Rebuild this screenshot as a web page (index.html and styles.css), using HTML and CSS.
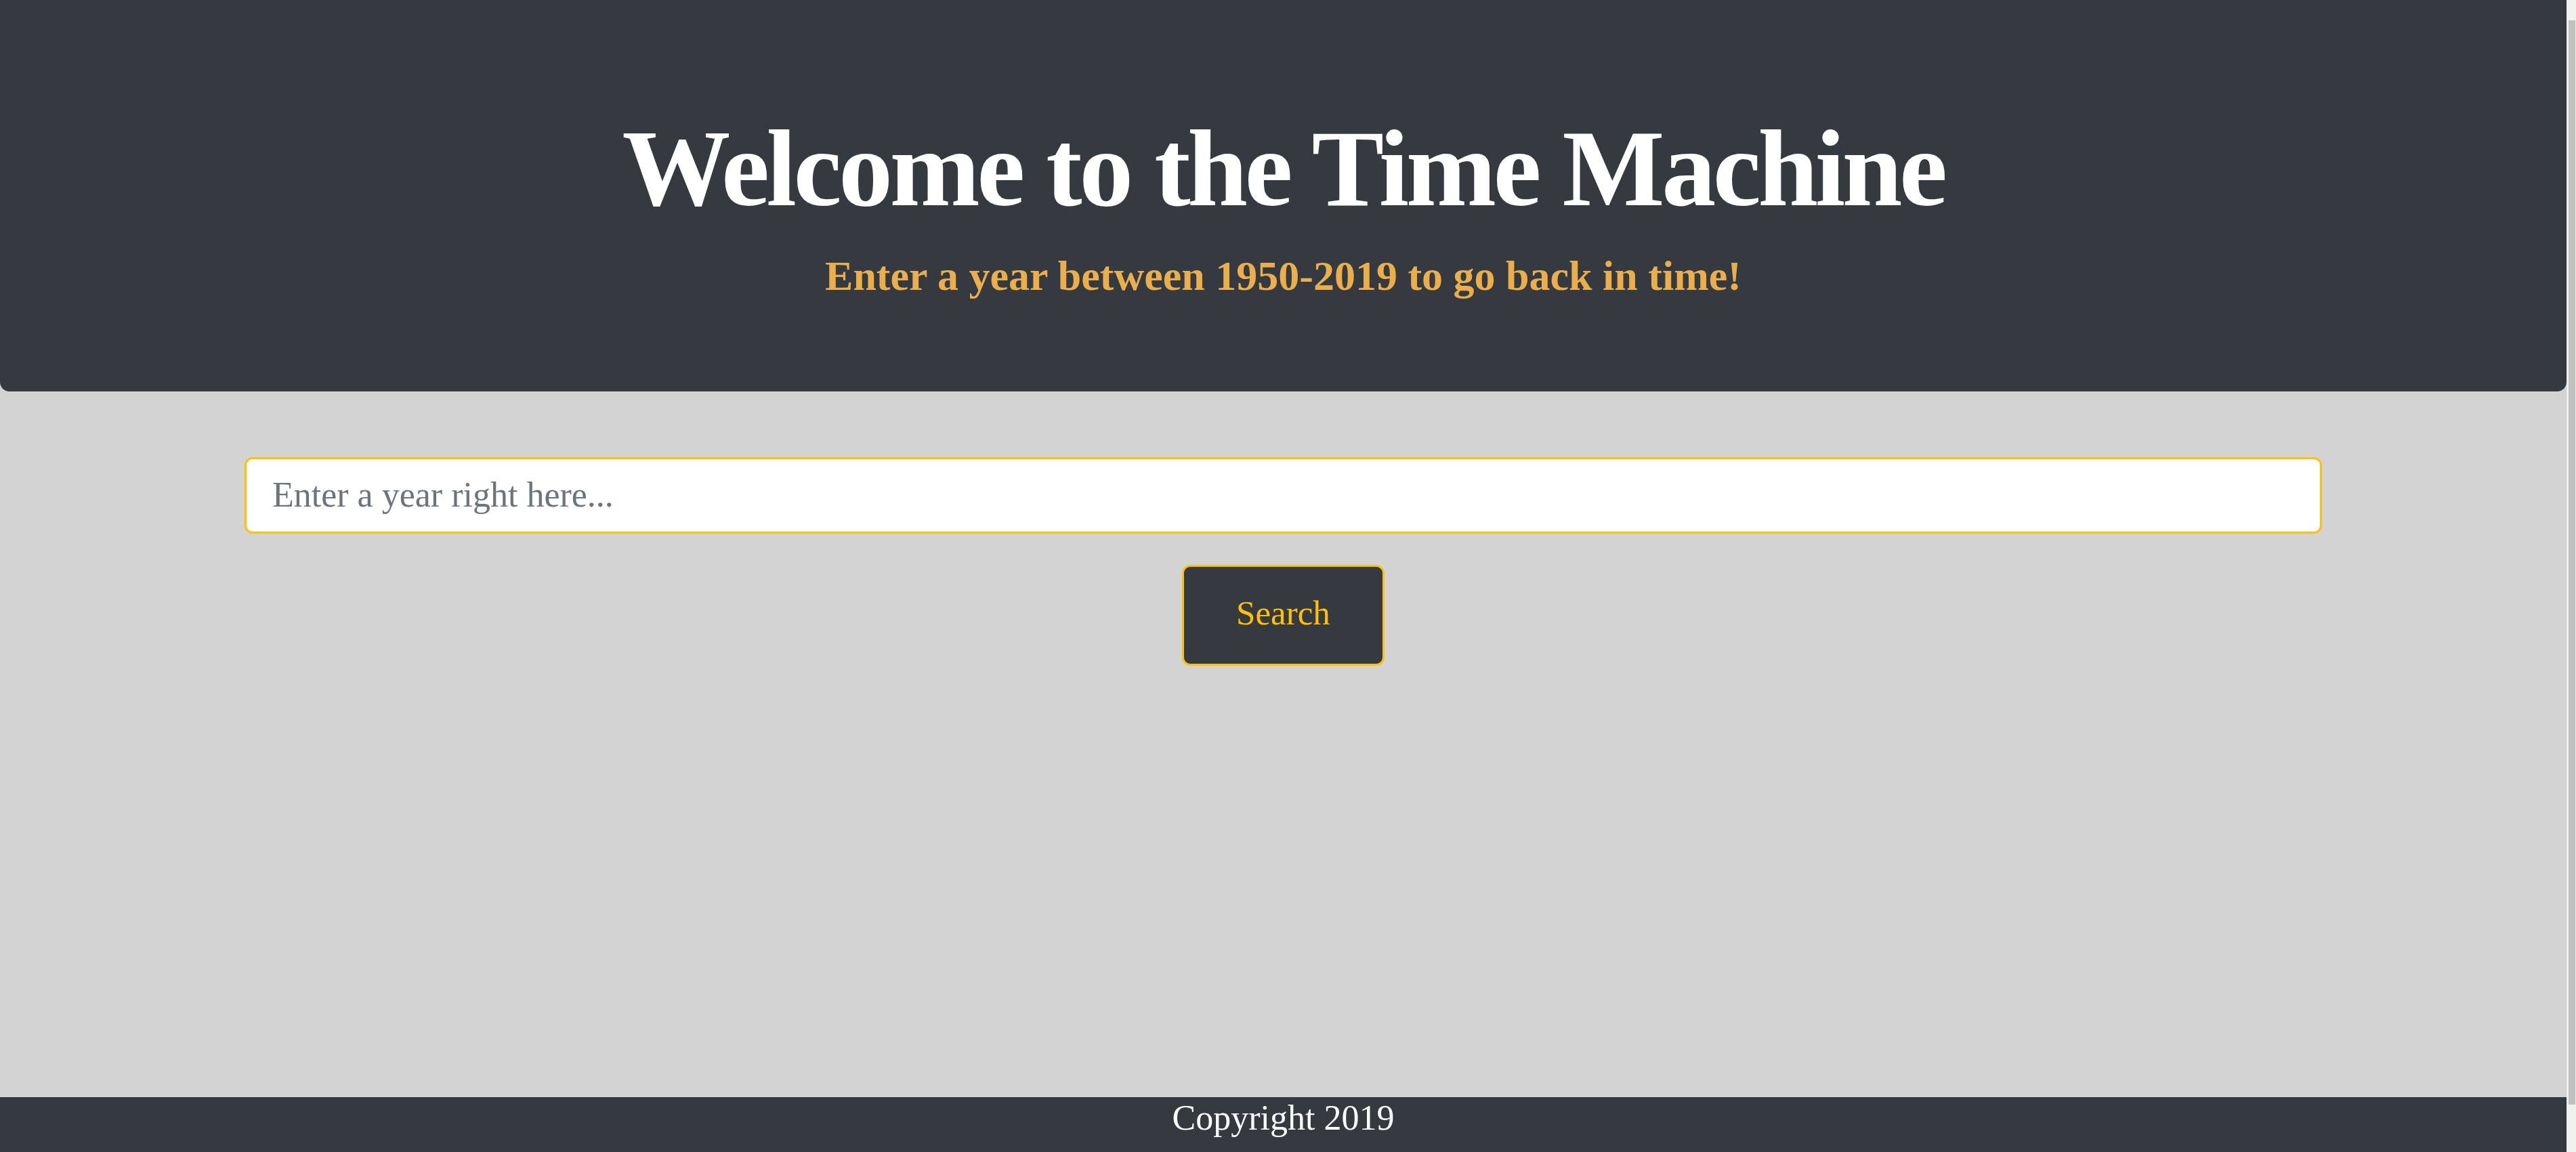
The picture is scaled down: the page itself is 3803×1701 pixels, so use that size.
FILE: index.html
```html
<!DOCTYPE html>
<html lang="en">
<head>
<meta charset="utf-8">
<title>Time Machine</title>
<link rel="stylesheet" href="styles.css">
</head>
<body>
<div class="page">
  <header class="hero">
    <h1 class="hero-title">Welcome to the Time Machine</h1>
    <p class="hero-lead">Enter a year between 1950-2019 to go back in time!</p>
  </header>
  <main class="content">
    <form class="search-form">
      <input class="year-input" type="text" placeholder="Enter a year right here...">
      <button class="search-btn" type="button">Search</button>
    </form>
  </main>
  <footer class="footer">Copyright 2019</footer>
</div>
<div class="scrollbar" aria-hidden="true"><span class="scroll-thumb"></span></div>
</body>
</html>
```
FILE: styles.css
```css
html {
  margin: 0;
  padding: 0;
  background: #f1f1f1;
}
body {
  margin: 0 14px 0 0;
  padding: 0;
  background: #d3d3d3;
  font-family: "Liberation Serif", "Times New Roman", serif;
  color: #212529;
}
.page {
  display: flex;
  flex-direction: column;
}
.hero {
  background: #343a40;
  border-radius: 0 0 14px 14px;
  padding: 153px 0 127px;
  text-align: center;
}
.hero-title {
  margin: 0;
  font-size: 160px;
  line-height: 192px;
  font-weight: 700;
  letter-spacing: -4.5px;
  color: #ffffff;
}
.hero-lead {
  margin: 18px 0 0;
  font-size: 62px;
  line-height: 88px;
  font-weight: 700;
  color: #eaae4a;
}
.content {
  height: 1042px;
  box-sizing: border-box;
  padding-top: 97px;
}
.search-form {
  width: 3067px;
  margin: 0 auto;
  display: flex;
  flex-direction: column;
  align-items: center;
  gap: 46px;
}
.year-input {
  box-sizing: border-box;
  width: 100%;
  height: 113px;
  border: 3px solid #ffc107;
  border-radius: 12px;
  background: #ffffff;
  padding: 0 38px 3px;
  font-family: "Liberation Serif", "Times New Roman", serif;
  font-size: 52px;
  color: #495057;
  outline: none;
}
.year-input::placeholder {
  color: #6c757d;
  opacity: 1;
}
.search-btn {
  box-sizing: border-box;
  width: 299px;
  height: 149px;
  border: 3px solid #ffc107;
  border-radius: 12px;
  background: #343a40;
  color: #ffc107;
  font-family: "Liberation Serif", "Times New Roman", serif;
  font-size: 51px;
  padding: 0 0 8px;
}
.footer {
  background: #343a40;
  color: #ffffff;
  text-align: center;
  font-size: 52px;
  line-height: 62px;
  height: 81px;
}
.scrollbar {
  position: fixed;
  top: 0;
  right: 0;
  width: 14px;
  height: 100vh;
  background: #f1f1f1;
  border-left: 1px solid #e8e8e8;
  box-sizing: border-box;
}
.scroll-thumb {
  position: absolute;
  top: 30px;
  left: 2px;
  right: 1px;
  height: 1601px;
  background: #c1c1c1;
}
```
